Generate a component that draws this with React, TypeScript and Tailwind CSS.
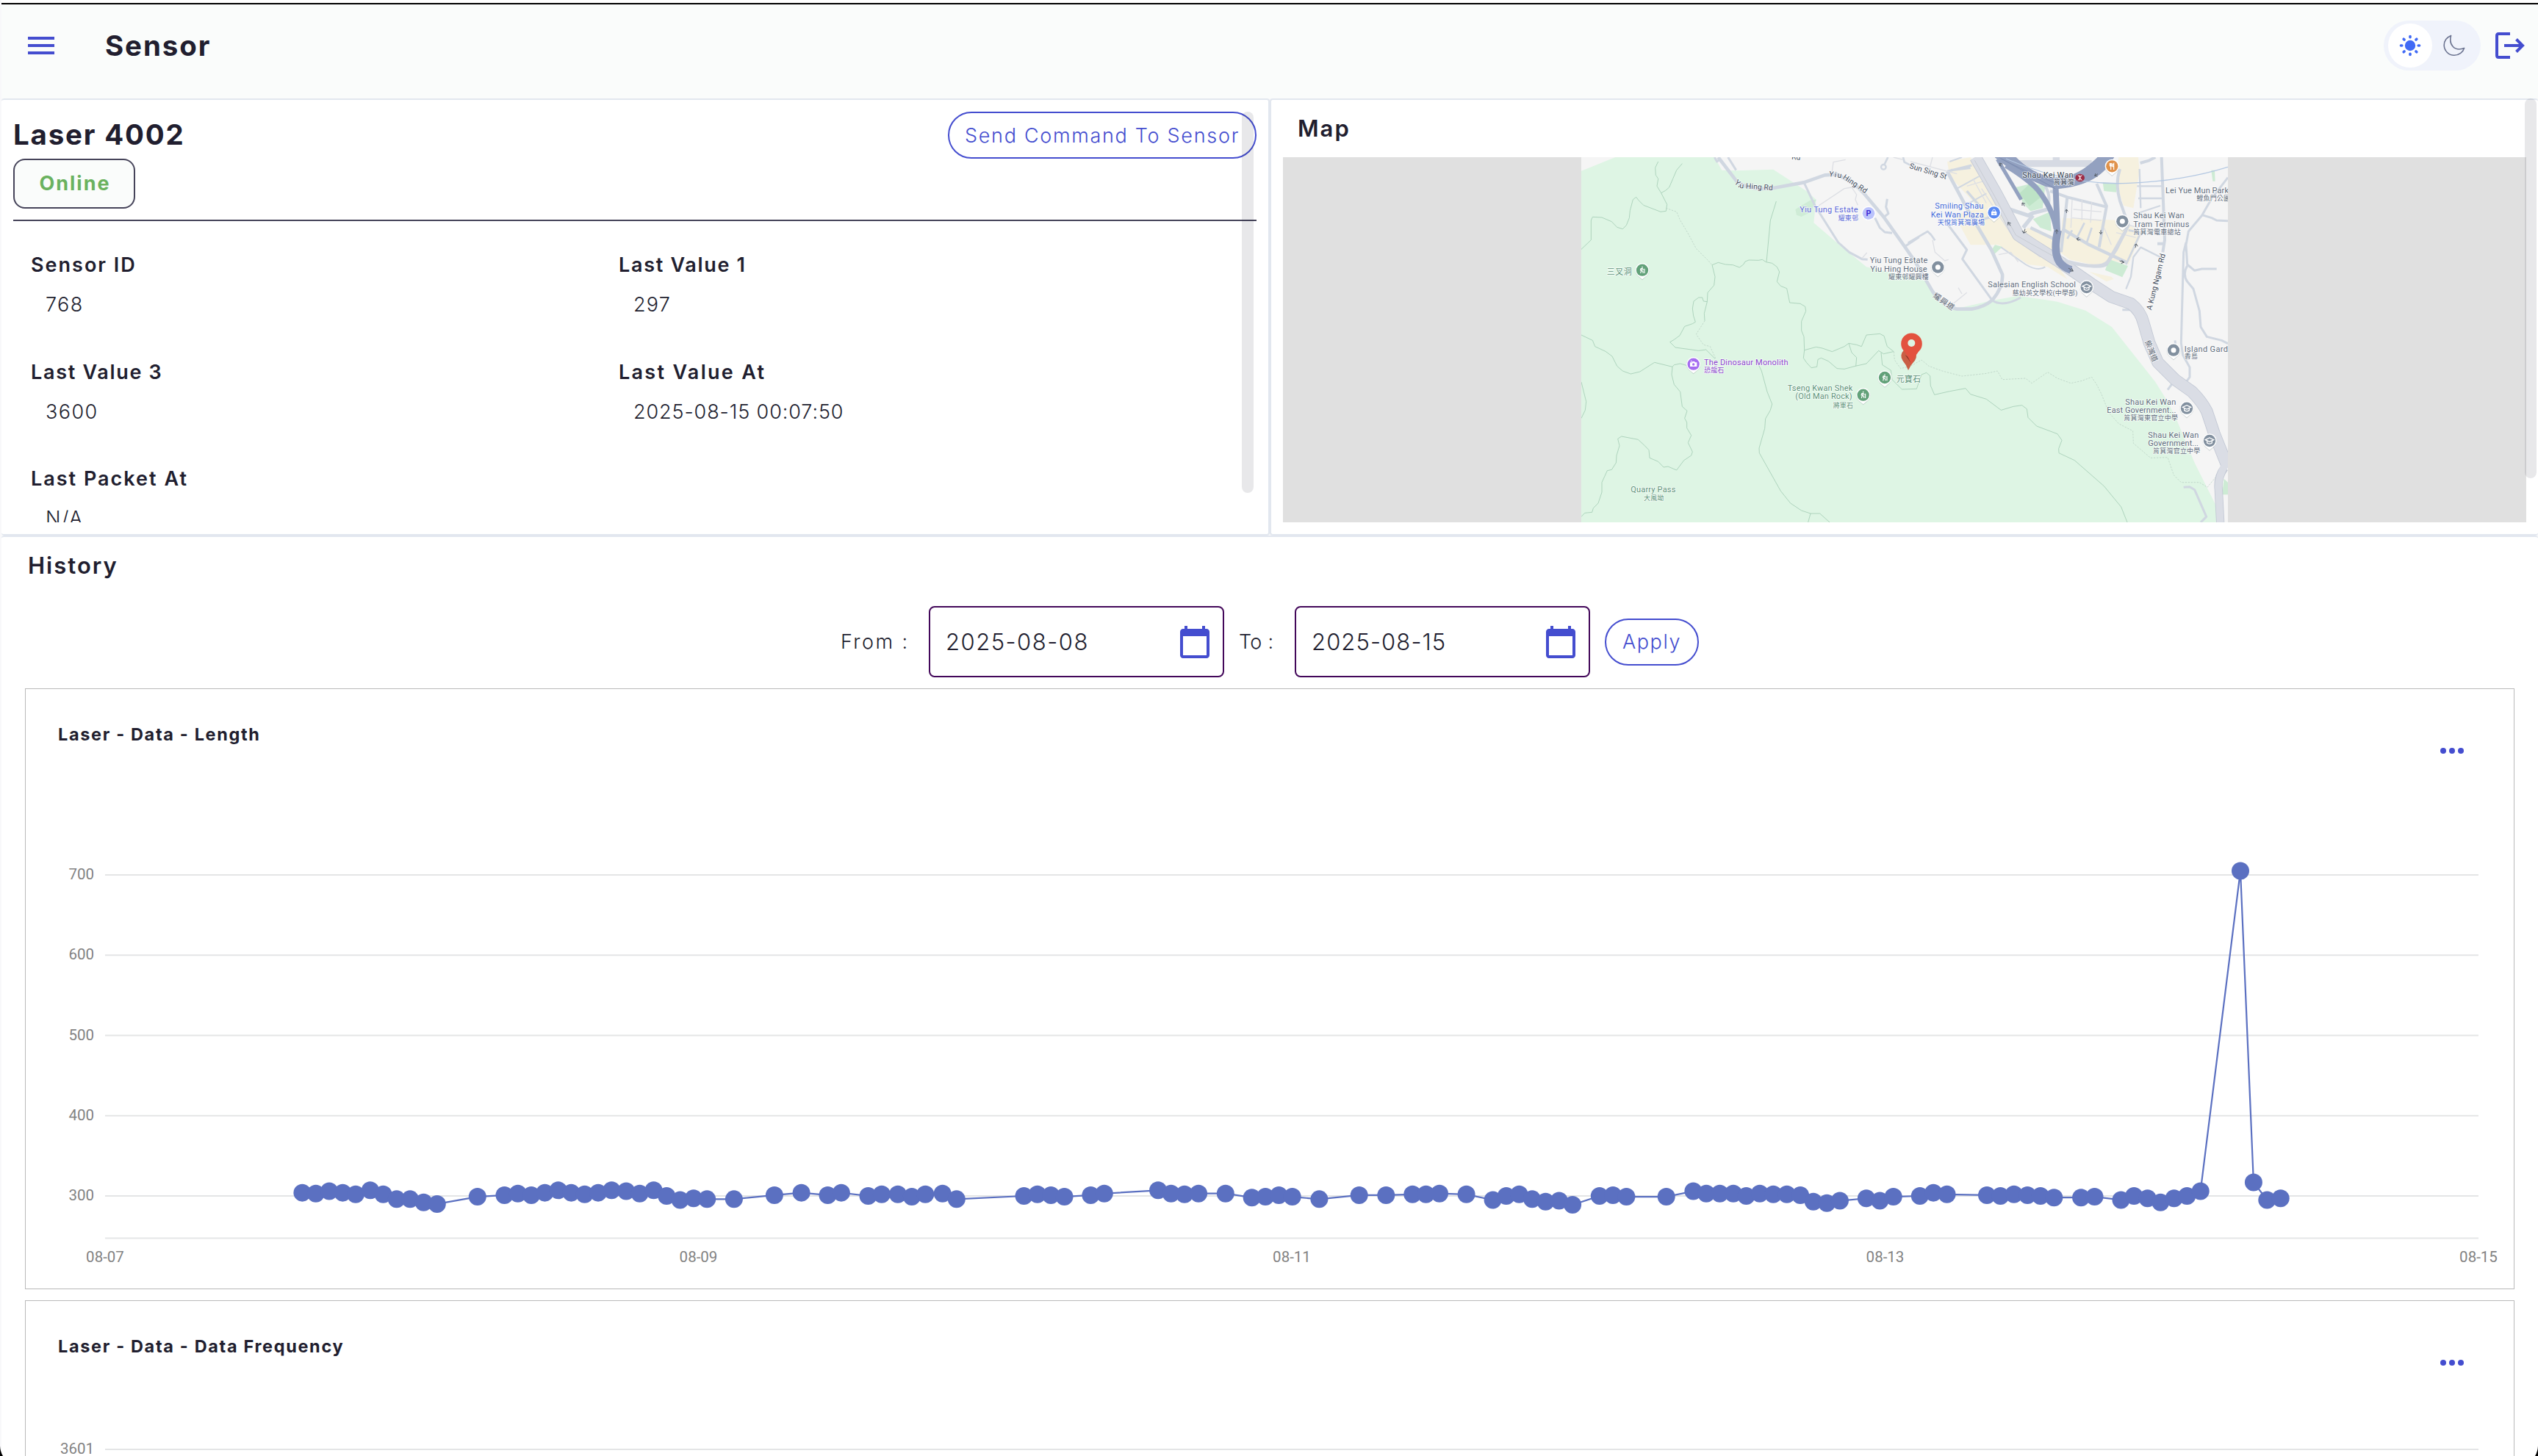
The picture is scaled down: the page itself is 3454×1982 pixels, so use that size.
import React from 'react';

const ACCENT = '#444dcf';

const CJK = "Roboto, 'Noto Sans CJK TC', sans-serif";

/* ---------- header icons ---------- */

function MenuIcon() {
  return (
    <svg viewBox="0 0 24 24" className="size-12" fill={ACCENT}>
      <path d="M3 18h18v-2H3v2zm0-5h18v-2H3v2zm0-7v2h18V6H3z" />
    </svg>
  );
}

function SunIcon() {
  const angles = [0, 45, 90, 135, 180, 225, 270, 315];
  return (
    <svg viewBox="-15 -15 30 30" className="size-[30px]">
      <circle r="7.2" fill="#4069f5" />
      {angles.map((a) => (
        <line key={a} y1="-12.5" y2="-11.2" stroke="#4069f5" strokeWidth="3.6" strokeLinecap="round" transform={`rotate(${a})`} />
      ))}
    </svg>
  );
}

function MoonIcon() {
  return (
    <svg viewBox="0 0 30 30" className="size-[30px]" fill="none" stroke="#6b7390" strokeWidth="1.6" strokeLinejoin="round">
      <path d="M10.6 1.4C5 3.6 1.2 8 1.2 14.6C1.2 22 7.4 28.3 15 28.3C21.600 28.3 27 24 28.600 18.600C26 19.800 24 20 21.600 20C15 20 10 14.500 9.800 8C9.700 5.500 10 3.500 10.600 1.400Z" />
    </svg>
  );
}

function LogoutIcon() {
  return (
    <svg viewBox="0 0 40 36" className="h-9 w-10" fill="none" stroke={ACCENT} strokeWidth="4">
      <path d="M20 2H4.500Q2 2 2 4.500V31.500Q2 34 4.500 34H20" />
      <path d="M12 18H37" />
      <path d="M28.500 9.500L37 18L28.500 26.500" strokeLinejoin="miter" />
    </svg>
  );
}

function CalendarIcon() {
  return (
    <svg viewBox="0 0 24 24" className="size-12" fill={ACCENT}>
      <path d="M20 3h-1V1h-2v2H7V1H5v2H4c-1.100 0-2 .9-2 2v16c0 1.100.9 2 2 2h16c1.100 0 2-.9 2-2V5c0-1.100-.9-2-2-2zm0 18H4V8h16v13z" />
    </svg>
  );
}

/* ---------- map ---------- */

type Glyph = 'dot' | 'hike' | 'photo' | 'park' | 'bag' | 'food' | 'school';

function Pin({ x, y, color, glyph }: { x: number; y: number; color: string; glyph: Glyph }) {
  return (
    <g transform={`translate(${x} ${y})`}>
      <path d="M0 38L-20 20A29 29 0 1 1 20 20Z" fill="#9aa5a8" opacity=".5" transform="translate(0 3)" />
      <path d="M0 38L-20 21A29 29 0 1 1 20 21Z" fill="#fff" />
      <circle r="24.500" fill={color} />
      {glyph === 'dot' && <circle r="10.500" fill="#fff" />}
      {glyph === 'hike' && (
        <g stroke="#fff" strokeWidth="3.500" fill="none">
          <circle cx="0" cy="-12" r="2.500" fill="#fff" stroke="none" />
          <path d="M-1 -8L-4 2L-7 13M-3 2L3 6V13M-8 2L-6 -6L0 -7L5 0M9 -6V13" />
        </g>
      )}
      {glyph === 'photo' && (
        <g>
          <path d="M-14 -7H-7L-4 -11H4L7 -7H14V10H-14Z" fill="#fff" />
          <circle cy="1" r="5" fill={color} />
          <circle cx="-9" cy="-12" r="2.500" fill="#fff" />
        </g>
      )}
      {glyph === 'bag' && (
        <g>
          <path d="M-11 -4H11V11H-11Z" fill="#fff" />
          <path d="M-5 -4V-8A5 5 0 0 1 5 -8V-4" fill="none" stroke="#fff" strokeWidth="3" />
          <path d="M-4 2A4 4 0 0 0 4 2" fill="none" stroke={color} strokeWidth="2.500" />
        </g>
      )}
      {glyph === 'food' && (
        <g stroke="#fff" strokeWidth="3.500" fill="none">
          <path d="M-9 -13V-4Q-9 0 -5 0Q-1 0 -1 -4V-13M-5 -13V14M7 14V-12Q2 -8 2 1H7" />
        </g>
      )}
      {glyph === 'school' && (
        <g>
          <path d="M-17 -4L0 -12L17 -4L0 4Z" fill="none" stroke="#fff" strokeWidth="4" />
          <path d="M-10 0V9Q0 16 10 9V0" fill="none" stroke="#fff" strokeWidth="4" />
        </g>
      )}
    </g>
  );
}

type LabelProps = {
  x: number;
  y: number;
  w: number;
  color: string;
  children: string;
  size?: number;
  rotate?: number;
  weight?: number;
};

function Label({ x, y, w, color, children, size = 33, rotate = 0, weight = 400 }: LabelProps) {
  return (
    <text
      x={x}
      y={y}
      textLength={w}
      fontSize={size}
      fontWeight={weight}
      fill={color}
      stroke="#fff"
      strokeOpacity=".75"
      strokeWidth="5"
      strokeLinejoin="round"
      paintOrder="stroke"
      transform={rotate ? `rotate(${rotate} ${x} ${y})` : undefined}
    >
      {children}
    </text>
  );
}

const TRAILS_WEST = [
  'M380 60L368 85L370 115L380 130L375 160L392 188L416 235L412 262L390 265L320 238L300 218L290 205L277 215L265 260L262 290L250 320L235 335L212 328L190 305L150 288L112 286L106 300L106 380L66 418',
  'M478 68L455 95L440 130L425 165L410 178L392 188',
  'M862 222L838 300L822 470',
  'M600 482L625 472L655 480L685 482L712 492L728 480L735 468L750 462L790 463L805 460L820 470L845 475L865 490L875 510L865 550L880 568L905 578L917 636L960 640L980 652L983 670L965 712L965 750L975 775L977 830L973 862L985 880L1005 902L1028 898L1032 868L1045 862L1075 875L1110 905L1140 907L1185 895L1230 885L1280 832L1300 845L1340 836',
  'M600 482L612 530L608 565L582 595L580 632L568 680L570 710',
  'M580 632L565 630L560 615L545 615L525 630L520 660L524 690L532 715L520 722L488 733L468 770L445 787L428 797L450 819L545 832L575 828L612 865',
  'M66 768L112 790L122 815L165 835L192 855L212 895L235 915L268 927L305 918L365 880L438 898L445 890L470 885L495 892',
  'M66 960L76 1000L86 1040L82 1075L66 1108',
  'M438 898L435 930L445 970L470 1000L478 1060L498 1078L488 1108L497 1125L497 1148L515 1178L502 1208L520 1245L515 1260L485 1280L455 1320L420 1305L402 1308L380 1285L345 1270L342 1238L325 1220L298 1195L230 1182L215 1192L222 1220L210 1260L208 1290L190 1318L172 1322L150 1370L150 1410L135 1455L115 1475L110 1492L80 1495L66 1510',
  'M790 890L802 915L825 1000L845 1050L838 1075L818 1110L815 1150L792 1230L793 1250L880 1405L920 1455L965 1485L1002 1497L1040 1497L1080 1533M1002 1497L992 1533',
  'M977 830L1025 817L1050 822L1090 836L1140 815L1158 802L1190 808L1210 815L1230 768L1285 763L1302 772L1315 815L1342 836M1158 802L1170 840L1190 860L1187 895M1290 840L1295 890L1330 912L1335 950L1375 990L1435 988L1455 930L1475 922L1490 935L1492 975L1508 1012L1570 998L1635 986L1655 1010L1720 1030L1780 1075L1830 1060L1865 1055L1885 1070L1890 1105L1925 1140L2010 1172L2028 1198L2015 1232L2016 1250L2080 1280L2200 1385L2270 1470L2295 1533',
];

const TRAILS_DASHED = [
  'M412 250L455 265L470 300L500 350L535 415L580 460L600 482',
  'M570 710L535 765L565 808L592 815L615 865',
  'M1342 836L1345 870L1370 905L1410 895L1455 870L1485 895L1540 915L1620 936L1720 925L1765 915L1785 950L1880 945L1905 965L1970 920L2010 945L2065 965L2110 955L2150 940L2170 970L2190 1010L2220 1085L2260 1130L2318 1160L2320 1210L2390 1270L2460 1268L2485 1340L2515 1370L2590 1370L2622 1390L2655 1350',
];

/* Minor streets, each as [path, width]. */
const STREETS: [string, number][] = [
  ['M625 42L700 140Q750 180 850 168L975 145L1060 115L1110 112L1180 150L1220 190L1300 285L1385 405L1430 470L1500 590Q1540 650 1600 662L1660 662Q1710 655 1745 625Q1790 570 1785 520L1740 420L1640 250L1560 100', 14],
  ['M610 42L620 60L632 50M665 42L698 95', 9],
  ['M975 145L1020 240L1115 390L1160 430L1212 458L1235 460', 9],
  ['M1315 212L1310 245L1320 272L1300 288M1265 290L1285 330L1305 348L1335 352M1385 408L1445 368', 9],
  ['M1380 42L1385 62L1420 80M1318 42L1302 75', 8],
  ['M1400 392L1480 345L1495 360L1510 382', 8],
  ['M1550 300L1640 420L1622 458L1745 628Q1790 655 1860 615', 9],
  ['M1575 95L1655 85M1560 100L1660 75M1690 300L1760 280M1640 180L1700 250', 10],
  ['M1600 170L1690 120M1630 240L1720 190M1570 60L1620 42', 6],
  ['M1800 250L1890 280L1910 270L1970 255M1870 330L1910 280', 16],
  ['M1960 160Q1985 200 1970 250M1980 180L2050 205L2210 245L2180 410M2050 205L2025 430', 12],
  ['M1900 330L2015 385M2030 335L2140 400L2290 470', 13],
  ['M2170 150L2212 245M2265 90Q2245 150 2265 220L2300 320Q2270 380 2250 420L2210 480Q2180 500 2050 470', 12],
  ['M2050 375L2070 340M2120 310L2090 370M2150 330L2130 390M2300 340L2350 350M2350 350L2290 480', 8],
  ['M1960 490Q1930 510 1880 480L1780 410', 6],
  ['M2435 42L2448 380L2440 430M2418 395H2450M2348 66L2385 55L2410 42', 12],
  ['M2290 580L2310 530L2320 450L2350 410L2430 450M2340 270L2430 240M2335 160H2440M2340 210H2440M2345 90L2350 250', 7],
  ['M2706 125L2640 210L2600 280L2545 345L2535 400L2540 480L2570 505L2600 498L2660 498M2600 278L2640 290L2660 300L2706 302', 9],
  ['M2535 390L2525 430L2515 800L2522 850L2550 900L2550 940L2535 960M2540 485Q2520 520 2540 550L2565 580L2590 670L2595 735L2620 775L2680 790L2706 803', 9],
  ['M2275 665L2320 665L2350 690M2490 790L2495 830M2460 992L2480 965M2525 1390L2550 1388L2570 1400L2605 1480L2618 1510L2595 1533', 9],
];

const THIN_STREETS =
  'M1035 240L1140 170L1170 165L1190 195L1185 215L1195 238M1090 100L1095 62L1145 52M1212 455L1232 432M1500 380L1510 430L1550 465L1565 460M1585 640L1640 595M1605 575L1620 600M1410 60L1600 110M1500 42L1490 80M1340 42L1380 52M1665 130L1720 230M1640 160L1740 130M1770 440L1820 430L1850 470M2070 215L2065 330M2075 255L2190 265M2070 290L2190 300M2110 215V300M2150 225L2145 310M2200 330L2230 400M2250 350L2330 370M2270 310L2340 330M1700 170L1830 370L1940 450';

function MapCanvas() {
  const grey = '#5f6c7c';
  const forest = '#5b9277';
  return (
    <svg viewBox="66 42 2640 1491" className="h-[497px] w-[880px]" fontFamily={CJK} preserveAspectRatio="none">
      <rect x="66" y="42" width="2640" height="1491" fill="#f5f5f5" />
      <path
        d="M66 98L205 42H610L640 95L700 97L850 92L985 180L1025 215L1015 310L1120 400L1230 490L1470 545L1510 610L1600 660L1740 628L1850 608L2010 632L2125 668L2232 735L2410 960L2460 1040L2495 1110L2570 1290L2660 1470V1533H66Z"
        fill="#def5e4"
      />
      <path d="M940 255L1000 218L1025 215L1005 265L965 285L945 278Z" fill="#cfecd6" />
      {/* built-up blocks */}
      <g fill="#f6f1df">
        <path d="M1560 60L1655 42L1755 215L1830 370L1990 455L2050 540L1970 490L1890 480L1770 400L1655 400L1590 280L1690 250L1570 120Z" />
        <path d="M2030 290L2270 300L2355 350L2300 480L2220 460L2190 490L2060 460L2020 430Z" />
        <path d="M2260 42H2340L2345 100L2320 250L2280 240L2250 150Z" />
        <path d="M1890 330L2010 370L2000 440L1860 350Z" />
        <path d="M2140 510L2230 530L2240 540L2210 550Z" />
      </g>
      <g fill="#cdebd4">
        <path d="M1840 165L1910 148L1960 160L1950 250L1900 262L1870 230Z" />
        <path d="M1910 295L1980 265L1985 345L1940 330Z" />
        <path d="M2195 145L2255 150L2250 185L2200 180Z" />
        <path d="M2220 458L2298 486L2275 532L2205 503Z" />
        <path d="M1755 400L1785 408L1750 440L1738 425Z" />
        <path d="M2638 95H2652L2654 140H2644Z" />
        <path d="M2690 1355L2706 1370V1420H2682Z" />
      </g>
      <path d="M1855 190L1900 148L1955 195L1895 242Z" fill="#bde3c6" />
      {/* trails */}
      <g fill="none" stroke="#a3cdb5" strokeWidth="2.500">
        {TRAILS_WEST.map((d) => (
          <path key={d} d={d} />
        ))}
        {TRAILS_DASHED.map((d) => (
          <path key={d} d={d} stroke="#bcd3c5" strokeDasharray="7 5" />
        ))}
      </g>
      {/* streets */}
      <g fill="none" stroke="#d0d7e1" strokeLinejoin="round">
        {STREETS.map(([d, w]) => (
          <path key={d} d={d} strokeWidth={w} />
        ))}
        <path d={THIN_STREETS} stroke="#dddfe4" strokeWidth="4" />
        <circle cx="1300" cy="82" r="10" strokeWidth="7" />
      </g>
      {/* main road */}
      <g fill="none" strokeLinejoin="round">
        <path d="M1675 42L1760 190L1850 360L1910 400L2020 470L2150 560L2230 612L2310 640Q2350 670 2362 720L2385 800L2420 880L2490 950L2560 1000Q2600 1040 2620 1080L2650 1170L2706 1310" stroke="#c2c8d4" strokeWidth="50" />
        <path d="M1675 42L1760 190L1850 360L1910 400L2020 470L2150 560L2230 612L2310 640Q2350 670 2362 720L2385 800L2420 880L2490 950L2560 1000Q2600 1040 2620 1080L2650 1170L2706 1310" stroke="#dadde5" strokeWidth="45" />
        <path d="M2692 1310Q2662 1350 2668 1400L2675 1533" stroke="#c2c8d4" strokeWidth="34" />
        <path d="M2700 1290Q2662 1350 2668 1400L2675 1533" stroke="#dadde5" strokeWidth="29" />
        <path d="M1672 55L1750 195L1840 360L1910 400L2010 455" stroke="#c8ccd3" strokeWidth="3" />
        <path d="M1850 68H2150M2005 42V68" stroke="#d6dae3" strokeWidth="28" />
        <path d="M2040 465Q2180 505 2215 470Q2235 440 2290 340" stroke="#d3d8e1" strokeWidth="14" />
      </g>
      {/* expressway */}
      <g fill="none" stroke="#93a1c0">
        <path d="M1755 42H1840C1880 85 1940 120 2000 126C2080 126 2130 85 2175 42H2240C2210 105 2140 160 2010 170L1960 160C1890 130 1810 90 1755 42Z" fill="#93a1c0" stroke="#8190b4" strokeWidth="2" />
        <path d="M1800 75Q1890 130 1930 175Q1990 250 2005 335" strokeWidth="22" />
        <path d="M1765 50L1862 215" strokeWidth="15" />
        <path d="M2002 150L2010 345Q1990 430 2015 470Q2030 492 2068 500" strokeWidth="24" />
        <path d="M2012 340Q1992 430 2018 470Q2035 492 2065 502" strokeWidth="32" stroke="#8e9cbd" />
        <path d="M1780 48Q1900 110 2010 150M1770 42L2000 170" stroke="#7b8bb0" strokeWidth="2.500" />
        <path d="M1800 48Q2060 160 2300 148Q2520 140 2706 82" stroke="#b4c8e2" strokeWidth="4" />
      </g>
      {/* one-way arrows */}
      <g stroke="#59616b" strokeWidth="3" fill="none">
        <path d="M1780 80L1774 66M1774 66L1786 70M1774 66L1774 78M1876 242L1866 228M1866 228V240M1866 228L1878 232M1818 322L1808 308M1808 308V320M1808 308L1820 312M1878 335L1872 352M1872 352L1866 342M1872 352L1884 346M2007 355V338M2007 338L2001 346M2007 338L2013 346M2047 270V255M2047 255L2041 263M2047 255L2053 263M2187 340V356M2187 356L2181 348M2187 356L2193 348M2104 380L2088 375M2088 375L2098 370M2088 375L2096 384M2328 412L2332 396M2332 396L2324 402M2332 396L2338 406M2264 465L2282 471M2282 471L2272 463M2282 471L2270 476M2175 110L2162 118M2162 118L2174 120M2162 118L2166 108M2055 495L2074 507M2074 507L2060 507M2074 507L2068 495" />
      </g>

      {/* road names */}
      <Label x={690} y={148} w={28} size={31} color="#3f4b5b" rotate={42}>Yi</Label>
      <Label x={712} y={168} w={136} size={31} color="#3f4b5b" rotate={4}>u Hing Rd</Label>
      <Label x={1076} y={120} w={52} size={31} color="#3f4b5b" rotate={8}>Yiu</Label>
      <Label x={1132} y={128} w={112} size={31} color="#3f4b5b" rotate={34}>Hing Rd</Label>
      <Label x={924} y={50} w={36} size={31} color="#3f4b5b" rotate={6}>Rd</Label>
      <Label x={1404} y={86} w={158} size={31} color="#3f4b5b" rotate={17}>Sun Sing St</Label>
      <Label x={1500} y={612} w={98} size={31} color="#5a6471" rotate={35}>耀興道</Label>
      <Label x={2366} y={795} w={92} size={31} color="#5a6471" rotate={68}>柴灣道</Label>
      <Label x={2394} y={668} w={236} size={31} color="#3f4b5b" rotate={-76}>A Kung Ngam Rd</Label>

      {/* places */}
      <Label x={958} y={268} w={238} color="#5b68d8">Yiu Tung Estate</Label>
      <Label x={1115} y={300} w={82} size={27} color="#5b68d8">耀東邨</Label>
      <Label x={1244} y={475} w={236} color={grey}>Yiu Tung Estate</Label>
      <Label x={1246} y={510} w={232} color={grey}>Yiu Hing House</Label>
      <Label x={1320} y={541} w={164} size={27} color={grey}>耀東邨耀興樓</Label>
      <Label x={170} y={522} w={102} size={33} color={forest}>三叉洞</Label>
      <Label x={567} y={892} w={344} color="#8a45cc">The Dinosaur Monolith</Label>
      <Label x={567} y={921} w={82} size={27} color="#8a45cc">恐龍石</Label>
      <Label x={908} y={996} w={266} color={forest}>Tseng Kwan Shek</Label>
      <Label x={940} y={1030} w={232} color={forest}>(Old Man Rock)</Label>
      <Label x={1094} y={1064} w={82} size={27} color={forest}>將軍石</Label>
      <Label x={1352} y={961} w={100} size={33} color={forest}>元寶石</Label>
      <Label x={268} y={1410} w={183} color={forest}>Quarry Pass</Label>
      <Label x={321} y={1442} w={82} size={27} color={forest}>大風坳</Label>
      <Label x={1510} y={251} w={198} color="#4269d8">Smiling Shau</Label>
      <Label x={1493} y={288} w={216} color="#4269d8">Kei Wan Plaza</Label>
      <Label x={1520} y={318} w={193} size={27} color="#4269d8">天悅筲箕灣廣場</Label>
      <Label x={1867} y={125} w={208} color="#333f50">Shau Kei Wan</Label>
      <Label x={1995} y={153} w={83} size={27} color="#333f50">筲箕灣</Label>
      <Label x={2320} y={292} w={208} color={grey}>Shau Kei Wan</Label>
      <Label x={2320} y={326} w={228} color={grey}>Tram Terminus</Label>
      <Label x={2320} y={357} w={193} size={27} color={grey}>筲箕灣電車總站</Label>
      <Label x={2451} y={189} w={258} color={grey}>Lei Yue Mun Park</Label>
      <Label x={2578} y={219} w={137} size={27} color={grey}>鯉魚門公園</Label>
      <Label x={1726} y={573} w={359} color={grey}>Salesian English School</Label>
      <Label x={1826} y={606} w={266} size={27} color={grey}>慈幼英文學校(中學部)</Label>
      <Label x={2528} y={836} w={216} color={grey}>Island Garden</Label>
      <Label x={2528} y={865} w={55} size={27} color={grey}>香島</Label>
      <Label x={2287} y={1053} w={207} color={grey}>Shau Kei Wan</Label>
      <Label x={2212} y={1087} w={282} color={grey}>East Government...</Label>
      <Label x={2281} y={1117} w={221} size={27} color={grey}>筲箕灣東官立中學</Label>
      <Label x={2380} y={1187} w={207} color={grey}>Shau Kei Wan</Label>
      <Label x={2380} y={1221} w={206} color={grey}>Government...</Label>
      <Label x={2400} y={1251} w={193} size={27} color={grey}>筲箕灣官立中學</Label>

      {/* pins */}
      <g>
        <circle cx="1239" cy="271" r="29" fill="#fff" />
        <circle cx="1239" cy="271" r="25" fill="#bbc3fb" />
        <text x="1239" y="282" textAnchor="middle" fontSize="32" fontWeight="700" fill="#3d2bd6">P</text>
      </g>
      <g>
        <ellipse cx="2102" cy="126" rx="19" ry="16" fill="#9c2b45" />
        <path d="M2094 115Q2102 132 2110 115M2094 137Q2102 120 2110 137M2102 115V137" stroke="#fff" strokeWidth="3" fill="none" />
      </g>
      <Pin x={315} y={503} color="#62a179" glyph="hike" />
      <Pin x={524} y={887} color="#a56df0" glyph="photo" />
      <Pin x={1305} y={942} color="#62a179" glyph="hike" />
      <Pin x={1217} y={1013} color="#62a179" glyph="hike" />
      <Pin x={1522} y={491} color="#82909f" glyph="dot" />
      <Pin x={1751} y={268} color="#5b8bf3" glyph="bag" />
      <Pin x={2233} y={79} color="#e0924a" glyph="food" />
      <Pin x={2275} y={304} color="#82909f" glyph="dot" />
      <Pin x={2129} y={573} color="#82909f" glyph="school" />
      <Pin x={2484} y={830} color="#82909f" glyph="dot" />
      <Pin x={2538} y={1067} color="#82909f" glyph="school" />
      <Pin x={2631} y={1200} color="#82909f" glyph="school" />
      <path d="M1401 912Q1392 888 1378 872A31 31 0 1 1 1428 872Q1410 890 1401 912Z" fill="#c95f45" />
      <path d="M1388 850L1414 884L1420 868Z" fill="#8d3426" />
      <path d="M1414 890Q1406 866 1385 835A43 43 0 1 1 1444 835Q1420 866 1414 890Z" fill="#e3523f" />
      <circle cx="1414" cy="801" r="15" fill="#def5e4" />
    </svg>
  );
}

/* ---------- charts ---------- */

/* Readings as [horizontal position inside the card, value]. */
const LENGTH_READINGS: [number, number][] = [
  [376.4, 304], [394.8, 303], [413.1, 306], [431.4, 304], [449, 302], [468.9, 307], [486.5, 302], [504.8, 296], [523.1, 296], [541.5, 292], [559.8, 290],
  [614.8, 299], [651.5, 301], [669.8, 303], [688.1, 301], [706.5, 304], [724.8, 307], [742.4, 304], [760.7, 302], [779.1, 304], [797.4, 307], [817.2, 306],
  [835.6, 303], [854.6, 307], [872.2, 300], [890.6, 295], [908.9, 297], [927.2, 296], [963.9, 296], [1018.9, 301], [1055.6, 304], [1091.5, 301], [1109.9, 304],
  [1146.5, 300], [1164.9, 302], [1186.9, 302], [1205.9, 299], [1224.3, 302], [1247.7, 303], [1266.8, 296], [1358.5, 300], [1376.8, 302], [1395.2, 301], [1413.5, 299],
  [1449.4, 301], [1467.8, 303], [1541.1, 307], [1558.7, 303], [1577, 302], [1596.1, 303], [1632.8, 303], [1668.7, 298], [1687.1, 299], [1705.4, 301], [1723.7, 299],
  [1760.4, 296], [1814.7, 301], [1851.3, 301], [1887.3, 302], [1905.6, 302], [1924, 303], [1960.6, 302], [1996.6, 295], [2014.9, 300], [2032.5, 302], [2050.1, 296],
  [2068.4, 293], [2086.8, 294], [2105.1, 289], [2141.8, 300], [2160.1, 301], [2178.4, 299], [2232.7, 299], [2269.4, 306], [2287.1, 303], [2305.5, 303], [2323.9, 303],
  [2341.5, 300], [2359.9, 303], [2378.3, 302], [2396.7, 302], [2415.1, 301], [2432.8, 293], [2451.2, 291], [2468.9, 294], [2504.9, 297], [2523.3, 294], [2541.7, 299],
  [2577.8, 300], [2596.2, 304], [2614.6, 302], [2669, 301], [2687.4, 300], [2705.8, 302], [2724.2, 301], [2741.9, 300], [2760.3, 298], [2797.1, 298], [2815.5, 299],
  [2851.5, 295], [2869.2, 300], [2887.6, 297], [2905.3, 292], [2923.7, 297], [2941.3, 300], [2959.7, 306], [3014, 705], [3031.9, 317], [3050.3, 295], [3068.7, 297],
];

const CHART_W = 3386;
const PLOT_X0 = 108;
const PLOT_X1 = 3338;
const yOf = (v: number) => 570 - (v - 300) * 1.0925;

function GridLine({ y, label }: { y: number; label: string }) {
  return (
    <g>
      <line x1={PLOT_X0} x2={PLOT_X1} y1={y} y2={y} stroke="#e4e5e6" strokeWidth="2" />
      <text x="93" y={y + 6} textAnchor="end" fontSize="20.500" fill="#828282">
        {label}
      </text>
    </g>
  );
}

function LengthChart() {
  const dates = ['08-07', '08-09', '08-11', '08-13', '08-15'];
  return (
    <svg viewBox={`0 0 ${CHART_W} 696`} className="h-[696px] w-[3386px] shrink-0" fontFamily="Roboto, sans-serif">
      {[700, 600, 500, 400, 300].map((v) => (
        <GridLine key={v} y={yOf(v)} label={String(v)} />
      ))}
      <line x1={PLOT_X0} x2={PLOT_X1} y1="627.500" y2="627.500" stroke="#e6e7e8" strokeWidth="2" />
      {dates.map((d, i) => (
        <text key={d} x={PLOT_X0 + i * 807.5} y="659.500" textAnchor="middle" fontSize="20.500" fill="#828282">
          {d}
        </text>
      ))}
      <polyline points={LENGTH_READINGS.map(([x, v]) => `${x},${yOf(v)}`).join(' ')} fill="none" stroke="#5b70c1" strokeWidth="2.200" />
      {LENGTH_READINGS.map(([x, v]) => (
        <circle key={x} cx={x} cy={yOf(v)} r="12" fill="#5b70c1" />
      ))}
    </svg>
  );
}

function FrequencyChart() {
  return (
    <svg viewBox={`0 0 ${CHART_W} 696`} className="h-[696px] w-[3386px] shrink-0" fontFamily="Roboto, sans-serif">
      <GridLine y={82} label="3601" />
    </svg>
  );
}

function ChartCard({ title, children }: { title: string; children: React.ReactNode }) {
  return (
    <section className="flex h-[818px] shrink-0 flex-col border border-[#b9b9b9]">
      <div className="flex h-[120px] shrink-0 items-start justify-between pt-[46px] pr-[68px] pl-11">
        <h3 className="text-[23.5px] leading-8 font-bold tracking-[1.65px]">{title}</h3>
        <div className="mt-[34px] flex gap-1">
          <span className="size-2 rounded-full bg-[#444dcf]" />
          <span className="size-2 rounded-full bg-[#444dcf]" />
          <span className="size-2 rounded-full bg-[#444dcf]" />
        </div>
      </div>
      {children}
    </section>
  );
}

/* ---------- page parts ---------- */

function Field({ label, labelClass, value, valueClass }: { label: string; labelClass: string; value: string; valueClass: string }) {
  return (
    <div className="text-[27px] leading-[54px] whitespace-nowrap">
      <div className={`font-semibold ${labelClass}`}>{label}</div>
      <div className={`pl-5 font-light ${valueClass}`}>{value}</div>
    </div>
  );
}

function DateBox({ value, textClass }: { value: string; textClass: string }) {
  return (
    <div className="flex h-[97px] w-[402px] items-center justify-between rounded-lg border-2 border-[#43085a] pr-3.5 pl-[21px]">
      <span className={`pt-0.5 text-[31px] font-light ${textClass}`}>{value}</span>
      <CalendarIcon />
    </div>
  );
}

export default function App() {
  return (
    <div className="relative flex h-screen w-full flex-col overflow-hidden bg-[#f8f8fa] pl-0.5 font-['Inter',sans-serif] text-[#211e2f]">
      <div className="h-1.5 shrink-0 border-b-2 border-black bg-white" />
      <header className="flex h-32 shrink-0 items-center bg-[#fafcfb] pr-[18px] pb-4 pl-[30px]">
        <MenuIcon />
        <h1 className="ml-[63px] text-[38.5px] leading-none font-bold tracking-[1.9px]">Sensor</h1>
        <div className="ml-auto flex h-[68px] w-[132px] items-center rounded-full bg-[#f0f3fb] pl-1.5">
          <div className="flex size-[60px] items-center justify-center rounded-full bg-white">
            <SunIcon />
          </div>
          <div className="flex size-[60px] items-center justify-center">
            <MoonIcon />
          </div>
        </div>
        <div className="ml-5">
          <LogoutIcon />
        </div>
      </header>

      <div className="flex h-[595px] shrink-0">
        <section className="relative w-[1726px] rounded border-2 border-l-0 border-[#e2e7ef] bg-white p-4">
          <div className="h-[559px] overflow-hidden">
            <div className="flex h-16 items-start justify-between">
              <h2 className="text-[38.5px] leading-[62px] font-bold tracking-[1.8px]">Laser 4002</h2>
              <button className="flex h-16 w-[420px] items-center justify-center rounded-full border-2 border-[#444dcf] pt-0.5 text-[27px] font-light tracking-[1.7px] whitespace-nowrap text-[#444dcf]">
                Send Command To Sensor
              </button>
            </div>
            <div className="flex h-[68px] w-[166px] items-center justify-center rounded-2xl border-2 border-[#46445a] bg-[#fafcfb] pl-0.5 text-[27px] font-bold tracking-[2px] text-[#6ab25f]">
              Online
            </div>
            <div className="mt-[15px] h-0.5 bg-[#46445a]" />
            <div className="mt-[33px] grid grid-cols-[800px_1fr] gap-y-[37.7px] pl-6">
              <Field label="Sensor ID" labelClass="tracking-[2px]" value="768" valueClass="tracking-[1.4px]" />
              <Field label="Last Value 1" labelClass="tracking-[1.7px]" value="297" valueClass="tracking-[1.2px]" />
              <Field label="Last Value 3" labelClass="tracking-[1.7px]" value="3600" valueClass="tracking-[1.4px]" />
              <Field label="Last Value At" labelClass="tracking-[2.3px]" value="2025-08-15 00:07:50" valueClass="tracking-[0.9px]" />
              <Field label="Last Packet At" labelClass="tracking-[2px]" value="N/A" valueClass="tracking-[1.4px]" />
            </div>
          </div>
          <div className="absolute top-4 right-5 h-[519px] w-4 rounded-full bg-[#1a1a2e]/10" />
        </section>

        <section className="flex flex-1 flex-col rounded border-2 border-r-0 border-[#e2e7ef] bg-white p-4">
          <h2 className="h-[62px] pl-5 text-[31px] leading-[46px] font-semibold tracking-[2px]">Map</h2>
          <div className="flex h-[497px] bg-[#e0e0e0] pl-[406px]">
            <MapCanvas />
          </div>
        </section>
      </div>

      <section className="flex flex-1 flex-col overflow-hidden rounded-t border-t-2 border-[#e2e7ef] bg-white px-8 pt-4">
        <h2 className="pl-1 text-[31px] leading-[46px] font-semibold tracking-[2px]">History</h2>
        <div className="mt-8 flex shrink-0 items-center justify-center gap-5 text-[27px] font-light whitespace-nowrap">
          <span className="w-[100px] pt-0.5 tracking-[2.4px]">From :</span>
          <DateBox value="2025-08-08" textClass="tracking-[1.5px]" />
          <span className="w-14 pt-0.5 tracking-[0.3px]">To :</span>
          <DateBox value="2025-08-15" textClass="tracking-[1.1px]" />
          <button className="flex h-16 w-32 items-center justify-center rounded-full border-2 border-[#444dcf] pt-0.5 tracking-[1.6px] text-[#444dcf]">Apply</button>
        </div>
        <div className="mt-[15px] flex flex-col gap-[15px]">
          <ChartCard title="Laser - Data - Length">
            <LengthChart />
          </ChartCard>
          <ChartCard title="Laser - Data - Data Frequency">
            <FrequencyChart />
          </ChartCard>
        </div>
      </section>

      <div className="absolute top-[134px] right-0.5 h-[517px] w-4 rounded-full bg-[#1a1a2e]/10" />
      <svg viewBox="0 0 4 16" className="absolute bottom-0 left-0 h-4 w-1">
        <path d="M0 0A30 30 0 0 0 4 16H0Z" fill="#000" />
      </svg>
      <svg viewBox="0 0 4 16" className="absolute right-0 bottom-0 h-4 w-1">
        <path d="M4 0A30 30 0 0 1 0 16H4Z" fill="#000" />
      </svg>
    </div>
  );
}
